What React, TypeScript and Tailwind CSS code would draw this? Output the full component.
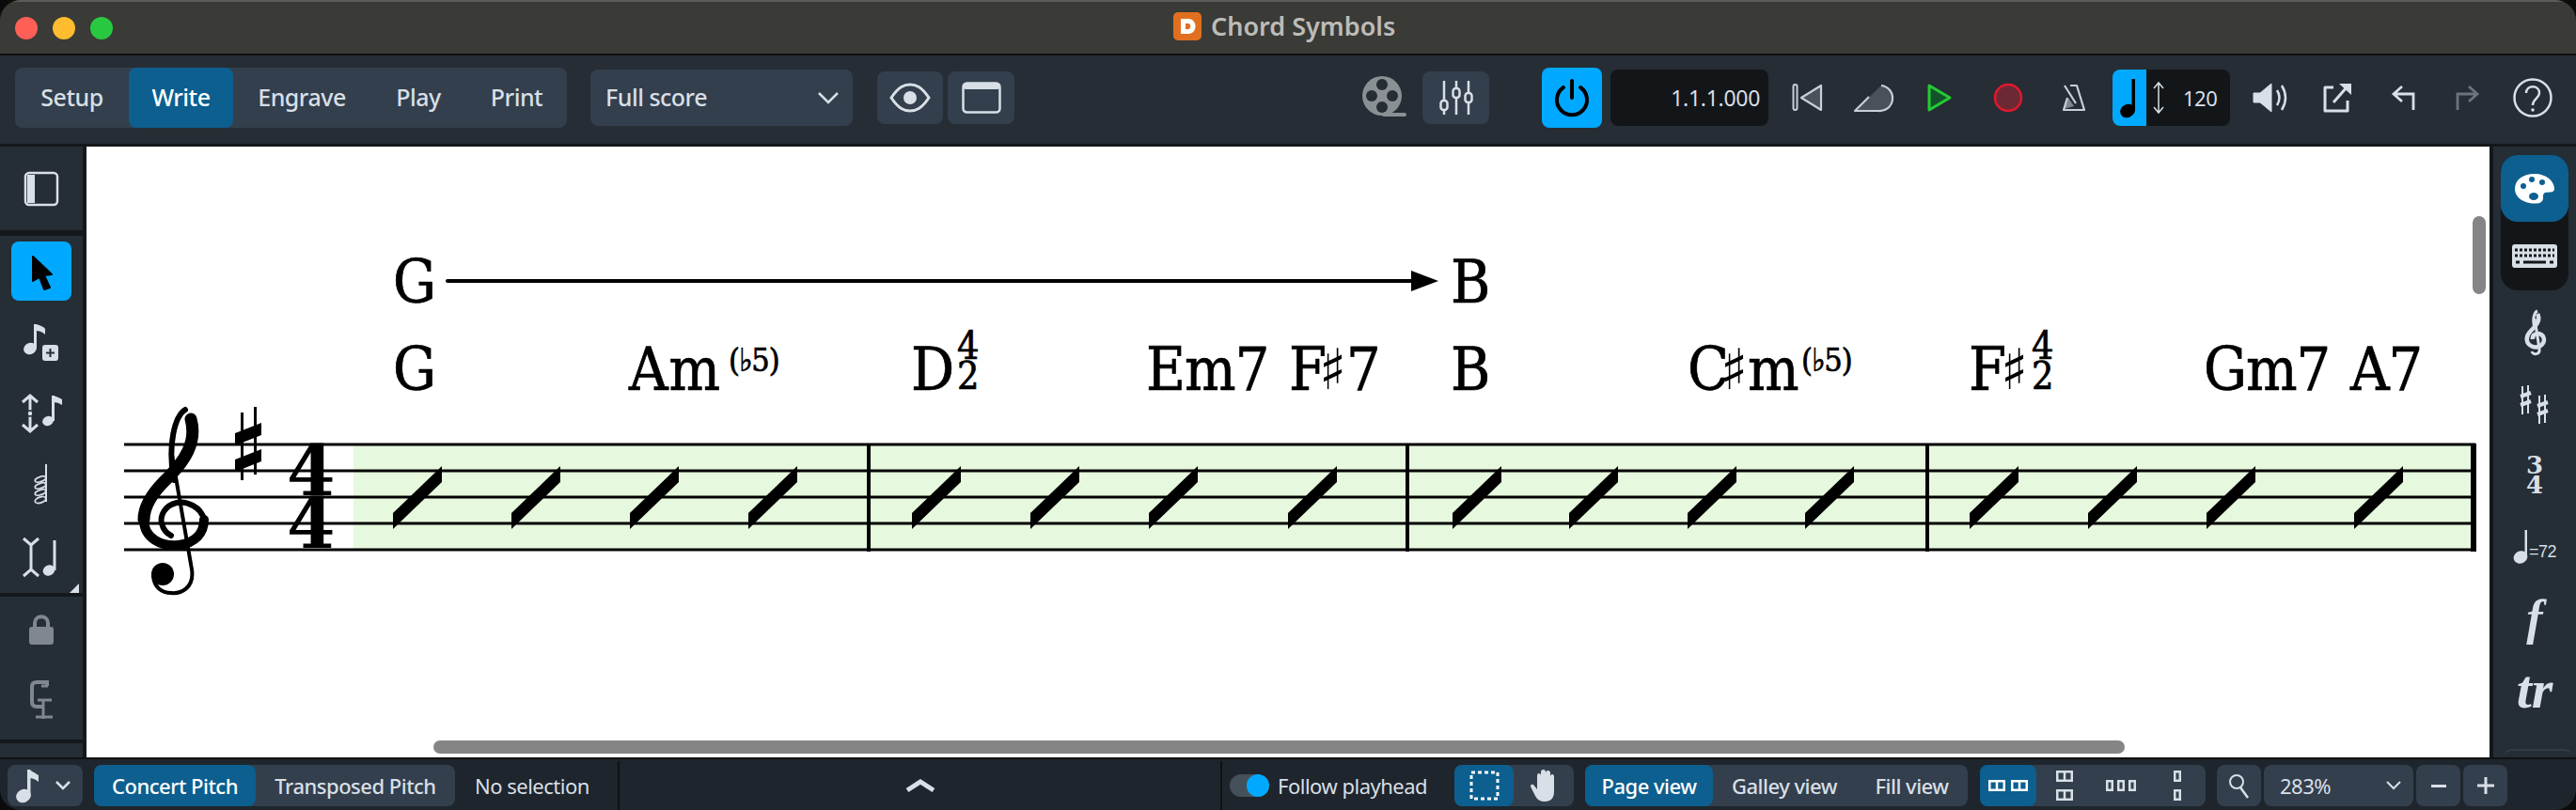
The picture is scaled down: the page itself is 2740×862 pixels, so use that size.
import type { ReactNode } from "react";

const slashes = [418, 544, 670, 796, 970, 1096, 1222, 1370, 1545, 1669, 1795, 1920, 2095, 2221, 2347, 2504];
const staffLines = [472, 500, 528, 556, 584];
const barlines = [924, 1497, 2050];

const Ico = ({ w = 44, h = 44, children }: { w?: number; h?: number; children: ReactNode }) => (
    <svg width={w} height={h} viewBox={`0 0 ${w} ${h}`} fill="none" className="shrink-0">
        {children}
    </svg>
);

const ToolBtn = ({ children, active }: { children: ReactNode; active?: boolean }) => (
    <div className={`flex items-center justify-center w-[64px] h-[64px] mx-auto rounded-lg ${active ? "bg-[#00a9ff]" : ""}`}>{children}</div>
);

const Score = () => (
    <svg className="absolute inset-0" width="2556" height="651" viewBox="92 155 2556 651" fill="none">
        <rect x="376" y="472" width="2253" height="112" fill="#e6f8dd" />
        {staffLines.map((y) => (
            <rect key={y} x="132" y={y - 1.5} width="2501" height="3" fill="#000" />
        ))}
        {barlines.map((x) => (
            <rect key={x} x={x - 2} y="471" width="4" height="115" fill="#000" />
        ))}
        <rect x="2628" y="471" width="6" height="115" fill="#000" />
        {slashes.map((x) => (
            <polygon key={x} points={`${x},545 ${x + 52},495 ${x + 52},512 ${x},562`} fill="#000" />
        ))}
        {/* treble clef */}
        <g stroke="#000" strokeLinecap="round">
            <path d="M182 478 L204 605 C207 625 192 631 182 630 C172 630 164 624 163 612" strokeWidth="4" />
            <path d="M185 510 C178 472 186 442 197 435" strokeWidth="6" />
            <path d="M203 445 C210 470 196 490 178 508 C160 525 153 540 153 552" strokeWidth="13" />
            <path d="M153 552 C153 572 172 581 190 579 C208 577 217 566 217 552" strokeWidth="10" />
            <path d="M217 552 C214 538 198 532 188 534 C175 537 170 548 172 556 C174 564 178 567 182 569" strokeWidth="6" />
        </g>
        <circle cx="173" cy="610" r="12" fill="#000" />
        {/* key signature sharp */}
        <g fill="#000">
            <rect x="256" y="438" width="3" height="72" />
            <rect x="270" y="432" width="3" height="72" />
            <polygon points="250,460 278,449 278,462 250,473" />
            <polygon points="250,488 278,477 278,490 250,501" />
        </g>
        {/* line between the two chords */}
        <rect x="474" y="296" width="1030" height="4" rx="2" fill="#000" />
        <polygon points="1501,287 1530,298 1501,309" fill="#000" />
    </svg>
);

const chordFont = "absolute whitespace-nowrap leading-none text-black font-['DejaVu_Serif_Condensed','DejaVu_Serif',serif] [-webkit-text-stroke:0.7px_#000]";
const big = "text-[64px] tracking-[-1px]";
const small = "text-[41px]";
const paren = "text-[34px] tracking-[-1px]";
const acc = "absolute leading-none text-black font-['DejaVu_Sans',sans-serif] font-bold text-[60px]";

const Chords = () => (
    <>
        <span className={`${chordFont} ${big} left-[326px] top-[112px]`}>G</span>
        <span className={`${chordFont} ${big} left-[1451px] top-[112px]`}>B</span>
        <span className={`${chordFont} ${big} left-[326px] top-[205px]`}>G</span>
        <span className={`${chordFont} text-[64px] tracking-[1px] left-[577px] top-[205px]`}>Am</span>
        <span className={`${chordFont} ${paren} left-[683px] top-[210px]`}>(♭5)</span>
        <span className={`${chordFont} ${big} left-[877px] top-[205px]`}>D</span>
        <span className={`${chordFont} ${small} left-[926px] top-[192px]`}>4</span>
        <span className={`${chordFont} ${small} left-[926px] top-[224px]`}>2</span>
        <span className={`${chordFont} ${big} left-[1127px] top-[205px]`}>Em7</span>
        <span className={`${chordFont} ${big} left-[1279px] top-[205px]`}>F</span>
        <span className={`${acc} left-[1311px] top-[207px]`}>♯</span>
        <span className={`${chordFont} ${big} left-[1340px] top-[205px]`}>7</span>
        <span className={`${chordFont} ${big} left-[1451px] top-[205px]`}>B</span>
        <span className={`${chordFont} ${big} left-[1703px] top-[205px]`}>C</span>
        <span className={`${acc} left-[1738px] top-[207px]`}>♯</span>
        <span className={`${chordFont} ${big} left-[1767px] top-[205px]`}>m</span>
        <span className={`${chordFont} ${paren} left-[1824px] top-[210px]`}>(♭5)</span>
        <span className={`${chordFont} ${big} left-[2002px] top-[205px]`}>F</span>
        <span className={`${acc} left-[2036px] top-[207px]`}>♯</span>
        <span className={`${chordFont} ${small} left-[2069px] top-[192px]`}>4</span>
        <span className={`${chordFont} ${small} left-[2069px] top-[224px]`}>2</span>
        <span className={`${chordFont} ${big} left-[2252px] top-[205px]`}>Gm7</span>
        <span className={`${chordFont} ${big} left-[2408px] top-[205px]`}>A7</span>
        <span className="absolute leading-none text-black font-['DejaVu_Serif',serif] font-bold text-[74px] left-[213px] top-[308px]">4</span>
        <span className="absolute leading-none text-black font-['DejaVu_Serif',serif] font-bold text-[74px] left-[213px] top-[364px]">4</span>
    </>
);

const LeftPanel = () => (
    <div className="w-[92px] shrink-0 flex flex-col bg-[#15181b] pr-1">
        <div className="h-[89px] bg-[#252d35] flex items-center justify-center">
            <Ico w={38} h={38}>
                <rect x="2" y="2" width="34" height="34" rx="4" stroke="#d8dfe6" strokeWidth="2.5" />
                <rect x="4" y="4" width="8" height="30" fill="#d8dfe6" />
            </Ico>
        </div>
        <div className="relative mt-[6px] h-[380px] bg-[#252d35] pt-[6px] flex flex-col">
            <ToolBtn active>
                <Ico>
                    <path d="M13 6 L33 25 L25 26 L31 39 L25 41 L20 28 L13 32 Z" fill="#000" stroke="#000" strokeWidth="2" strokeLinejoin="round" />
                </Ico>
            </ToolBtn>
            <div className="h-[77px] flex items-center justify-center mt-[5px]">
                <Ico w={40} h={44}>
                    <ellipse cx="8" cy="29" rx="7" ry="6" transform="rotate(-25 8 29)" fill="#d8dfe6" />
                    <rect x="12" y="3" width="3" height="26" fill="#d8dfe6" />
                    <path d="M14 3 Q22 5 24 8 V14 Q20 10 14 10 Z" fill="#d8dfe6" />
                    <rect x="21" y="25" width="17" height="17" rx="3" fill="#d8dfe6" />
                    <path d="M29.5 29 V38 M25 33.5 H34" stroke="#252d35" strokeWidth="2" />
                </Ico>
            </div>
            <div className="h-[77px] flex items-center justify-center">
                <Ico w={46} h={44}>
                    <path d="M11 3 V41 M3 10 L11 3 L19 10 M3 34 L11 41 L19 34" stroke="#d8dfe6" strokeWidth="3" />
                    <circle cx="11" cy="22" r="3" fill="#d8dfe6" stroke="#252d35" strokeWidth="1.5" />
                    <ellipse cx="30" cy="30" rx="6" ry="5" transform="rotate(-25 30 30)" fill="#d8dfe6" />
                    <rect x="34" y="3" width="3" height="27" fill="#d8dfe6" />
                    <path d="M36 3 Q42 5 45 7 V13 Q41 10 36 10 Z" fill="#d8dfe6" />
                </Ico>
            </div>
            <div className="h-[77px] flex items-center justify-center">
                <Ico w={18} h={46}>
                    <rect x="13" y="1" width="2" height="40" fill="#d8dfe6" />
                    <g stroke="#d8dfe6" strokeWidth="1.8">
                        <ellipse cx="8" cy="17" rx="6" ry="2.6" transform="rotate(-20 8 17)" />
                        <ellipse cx="8" cy="24" rx="6" ry="2.6" transform="rotate(-20 8 24)" />
                        <ellipse cx="8" cy="31" rx="6" ry="2.6" transform="rotate(-20 8 31)" />
                        <ellipse cx="8" cy="39" rx="6" ry="3" transform="rotate(-20 8 39)" />
                    </g>
                </Ico>
            </div>
            <div className="h-[77px] flex items-center justify-center">
                <Ico w={40} h={44}>
                    <path d="M9 8 V36 M1 2 L9 9 L17 2 M1 42 L9 35 L17 42" stroke="#d8dfe6" strokeWidth="3" />
                    <ellipse cx="28" cy="36" rx="6.5" ry="5.5" transform="rotate(-25 28 36)" fill="#d8dfe6" />
                    <rect x="32.5" y="4" width="3" height="32" fill="#d8dfe6" />
                </Ico>
            </div>
            <div className="absolute right-1 bottom-0 w-0 h-0 border-l-[10px] border-l-transparent border-b-[10px] border-b-[#d8dfe6]" />
        </div>
        <div className="mt-1 h-[152px] bg-[#252d35] flex flex-col items-center pt-[18px] gap-[36px]">
            <Ico w={28} h={34}>
                <path d="M7 14 V10 C7 1 21 1 21 10 V14" stroke="#80878f" strokeWidth="4" />
                <rect x="1" y="14" width="26" height="19" rx="3" fill="#80878f" />
            </Ico>
            <Ico w={26} h={44}>
                <path d="M19 7 V3 H8 Q3 3 3 8 V24 Q3 29 8 29 H14" stroke="#80878f" strokeWidth="4" />
                <path d="M13 7 H20 M9 22 H24 M15 22 V42 M7 40 H25" stroke="#80878f" strokeWidth="3" />
            </Ico>
        </div>
        <div className="mt-1 flex-1 bg-[#252d35]" />
    </div>
);

const RightPanel = () => (
    <div className="w-[92px] shrink-0 flex flex-col bg-[#252d35] border-l-4 border-[#15181b] pl-2 pt-[9px]">
        <div className="w-[72px] h-[144px] rounded-[18px] bg-[#131619]">
            <div className="h-[71px] rounded-[18px] bg-[#0c5f8f] flex items-center justify-center">
                <Ico w={44} h={36}>
                    <path d="M22 2 C35 2 43 10 43 18 C43 23 36 21 33 22 C29 24 33 29 29 32 C24 36 1 33 1 18 C1 8 10 2 22 2 Z" fill="#fff" />
                    <circle cx="10" cy="15" r="3" fill="#0c5f8f" />
                    <circle cx="19" cy="8" r="3" fill="#0c5f8f" />
                    <circle cx="30" cy="11" r="3" fill="#0c5f8f" />
                    <ellipse cx="21" cy="26" rx="5" ry="4" fill="#0c5f8f" />
                </Ico>
            </div>
            <div className="h-[73px] flex items-center justify-center">
                <Ico w={48} h={26}>
                    <rect x="0" y="0" width="48" height="25" rx="3" fill="#d8dfe6" />
                    <path d="M3 6 H45 M3 12 H45" stroke="#131619" strokeWidth="3" strokeDasharray="3 2" />
                    <path d="M4 19 H8 M12 19 H36 M40 19 H44" stroke="#131619" strokeWidth="3" />
                </Ico>
            </div>
        </div>
        <div className="h-[76px] flex items-center justify-center w-[72px] mt-[7px]">
            <Ico w={26} h={50}>
                <path d="M16 5 C20 12 14 18 9 23 C3 29 3 37 11 40 C20 42 25 35 22 29 C18 24 10 26 11 32" stroke="#d8dfe6" strokeWidth="4.5" />
                <path d="M13 20 C10 10 13 3 16 2 M13 10 L18 42 C19 49 11 49 10 45" stroke="#d8dfe6" strokeWidth="3" />
            </Ico>
        </div>
        <div className="h-[76px] flex items-center justify-center w-[72px]">
            <Ico w={32} h={42}>
                <path d="M3 2 V32 M9 1 V31 M21 12 V42 M27 11 V41" stroke="#d8dfe6" strokeWidth="2" />
                <path d="M1 13 L12 9 M1 22 L12 18 M19 23 L30 19 M19 32 L30 28" stroke="#d8dfe6" strokeWidth="4" />
            </Ico>
        </div>
        <div className="h-[76px] flex flex-col items-center justify-center w-[72px] text-[#d8dfe6] font-['DejaVu_Serif',serif] font-bold text-[26px] leading-[21px]">
            <span>3</span>
            <span>4</span>
        </div>
        <div className="h-[76px] flex items-center justify-center w-[72px] text-[#d8dfe6]">
            <Ico w={16} h={38}>
                <ellipse cx="8" cy="30" rx="7.5" ry="6.5" transform="rotate(-25 8 30)" fill="#d8dfe6" />
                <rect x="12.5" y="1" width="2.5" height="29" fill="#d8dfe6" />
            </Ico>
            <span className="text-[18px] font-['Liberation_Sans',sans-serif] mt-[10px] ml-[1px] tracking-[-0.5px]">=72</span>
        </div>
        <div className="h-[76px] flex items-center justify-center w-[72px] text-[#d8dfe6] font-['Liberation_Serif',serif] font-bold italic text-[52px] leading-none">f</div>
        <div className="h-[76px] flex items-center justify-center w-[72px] text-[#d8dfe6] font-['Liberation_Serif',serif] font-bold italic text-[58px] leading-none">tr</div>
        <div className="flex-1 mx-auto w-[72px] rounded-t-lg border-t-2 border-[#333c45] mt-[25px]" />
    </div>
);

const Canvas = () => (
    <div className="relative flex-1 bg-white overflow-hidden">
        <Score />
        <Chords />
        <div className="absolute left-[369px] bottom-[4px] w-[1799px] h-[14px] rounded-full bg-[#858585]" />
        <div className="absolute right-[4px] top-[74px] w-[14px] h-[83px] rounded-full bg-[#858585]" />
    </div>
);

const Transport = ({ children }: { children: ReactNode }) => (
    <div className="w-[70px] shrink-0 flex items-center justify-center">{children}</div>
);

const Toolbar = () => (
    <div className="h-[96px] shrink-0 flex items-center pl-4 pb-1 bg-[#262d34] text-[#d8dfe6] font-['Noto_Sans',sans-serif] text-[25px] tracking-[-0.5px] font-medium border-t-2 border-[#111]">
        <div className="flex w-[587px] h-16 rounded-lg bg-[#333f4d]">
            <div className="w-[121px] flex items-center justify-center">Setup</div>
            <div className="w-[111px] flex items-center justify-center rounded-lg bg-[#0c5f8f] text-white">Write</div>
            <div className="w-[146px] flex items-center justify-center">Engrave</div>
            <div className="w-[102px] flex items-center justify-center">Play</div>
            <div className="w-[107px] flex items-center justify-center">Print</div>
        </div>
        <div className="ml-[25px] w-[279px] h-[60px] rounded-lg bg-[#333f4d] flex items-center justify-between pl-4 pr-[14px]">
            <span>Full score</span>
            <Ico w={24} h={16}>
                <path d="M2 3 L12 13 L22 3" stroke="#d8dfe6" strokeWidth="2.5" />
            </Ico>
        </div>
        <div className="ml-[26px] w-[70px] h-14 rounded-lg bg-[#333f4d] flex items-center justify-center">
            <Ico w={44} h={32}>
                <path d="M2 16 C10 4 16 2 22 2 C28 2 34 4 42 16 C34 28 28 30 22 30 C16 30 10 28 2 16 Z" stroke="#d8dfe6" strokeWidth="3" />
                <circle cx="22" cy="16" r="7" fill="#d8dfe6" />
            </Ico>
        </div>
        <div className="ml-[5px] w-[71px] h-14 rounded-lg bg-[#333f4d] flex items-center justify-center">
            <Ico w={42} h={34}>
                <rect x="1.5" y="1.5" width="39" height="31" rx="4" stroke="#d8dfe6" strokeWidth="2.5" />
                <rect x="2" y="2" width="38" height="6" rx="2" fill="#d8dfe6" />
            </Ico>
        </div>
        <div className="ml-[369px] w-[50px] flex justify-center">
            <Ico w={50} h={50}>
                <circle cx="22" cy="23" r="21" fill="#8b9095" />
                <circle cx="22" cy="11" r="6" fill="#262d34" />
                <circle cx="22" cy="35" r="6" fill="#262d34" />
                <circle cx="11" cy="23" r="6" fill="#262d34" />
                <circle cx="33" cy="23" r="6" fill="#262d34" />
                <rect x="22" y="41" width="26" height="4" rx="2" fill="#8b9095" />
            </Ico>
        </div>
        <div className="ml-[15px] w-[71px] h-14 rounded-lg bg-[#333f4d] flex items-center justify-center">
            <Ico w={40} h={40}>
                <path d="M7 2 V38 M20 2 V38 M33 2 V38" stroke="#d8dfe6" strokeWidth="2.5" />
                <rect x="3.5" y="23" width="7" height="10" rx="3" fill="#333f4d" stroke="#d8dfe6" strokeWidth="2.5" />
                <rect x="16.5" y="10" width="7" height="10" rx="3" fill="#333f4d" stroke="#d8dfe6" strokeWidth="2.5" />
                <rect x="29.5" y="15" width="7" height="10" rx="3" fill="#333f4d" stroke="#d8dfe6" strokeWidth="2.5" />
            </Ico>
        </div>
        <div className="ml-[56px] w-16 h-16 rounded-lg bg-[#00a9ff] flex items-center justify-center">
            <Ico w={40} h={44}>
                <path d="M11 11 A16 16 0 1 0 29 11" stroke="#000" strokeWidth="4" strokeLinecap="round" />
                <path d="M20 4 V22" stroke="#000" strokeWidth="4" strokeLinecap="round" />
            </Ico>
        </div>
        <div className="ml-[9px] w-[168px] h-[60px] rounded-lg bg-[#131619] flex items-center justify-end pr-[9px] text-[23px] font-normal tracking-[-0.3px]">1.1.1.000</div>
        <div className="ml-[7px] flex">
            <Transport>
                <Ico w={34} h={32}>
                    <rect x="1.5" y="2" width="4" height="27" rx="2" stroke="#c8cfd6" strokeWidth="2" />
                    <path d="M31 3 V29 L10 16 Z" fill="#4b5158" stroke="#c8cfd6" strokeWidth="2.2" strokeLinejoin="round" />
                </Ico>
            </Transport>
            <Transport>
                <Ico w={44} h={32}>
                    <path d="M2 30 L30 3 A13.5 13.5 0 0 1 27 30 Z" fill="#4b5158" />
                    <path d="M30 3 A13.5 13.5 0 0 1 27 30 H2 L17 15" stroke="#c8cfd6" strokeWidth="2.2" strokeLinejoin="round" />
                </Ico>
            </Transport>
            <Transport>
                <Ico w={28} h={32}>
                    <path d="M3 3 L25 16 L3 29 Z" fill="#14522a" stroke="#22cc33" strokeWidth="3" strokeLinejoin="round" />
                </Ico>
            </Transport>
            <div className="w-[3px]" />
            <Transport>
                <Ico w={32} h={32}>
                    <circle cx="16" cy="16" r="14" fill="#6b2a33" stroke="#e0182d" strokeWidth="2.5" />
                </Ico>
            </Transport>
            <Transport>
                <Ico w={26} h={30}>
                    <path d="M2 27 L7 15 L13 24 Z" fill="#80878f" />
                    <path d="M9 2 H16 L24 28 H2 L6 15" stroke="#c8cfd6" strokeWidth="2.2" strokeLinejoin="round" />
                    <path d="M3 2 L15 21" stroke="#c8cfd6" strokeWidth="2.2" />
                </Ico>
            </Transport>
        </div>
        <div className="ml-[6px] w-[125px] h-[60px] rounded-lg bg-[#131619] flex items-center overflow-hidden text-[22px] font-normal">
            <div className="w-9 h-full bg-[#00a9ff] flex items-center justify-center">
                <Ico w={24} h={44}>
                    <ellipse cx="10" cy="36" rx="8" ry="7" transform="rotate(-25 10 36)" fill="#000" />
                    <rect x="14.5" y="2" width="3.5" height="34" fill="#000" />
                </Ico>
            </div>
            <div className="ml-[5px]">
                <Ico w={16} h={36}>
                    <path d="M8 2 V34 M3 8 L8 2 L13 8 M3 28 L8 34 L13 28" stroke="#d8dfe6" strokeWidth="1.5" />
                </Ico>
            </div>
            <span className="ml-[18px]">120</span>
        </div>
        <div className="ml-[10px] flex">
            <Transport>
                <Ico w={42} h={34}>
                    <path d="M1 12 H8 L20 2 V32 L8 22 H1 Z" fill="#d8dfe6" stroke="#d8dfe6" strokeLinejoin="round" />
                    <path d="M26 9 Q31 17 26 25 M31 4 Q39 17 31 30" stroke="#d8dfe6" strokeWidth="2.5" />
                </Ico>
            </Transport>
            <Transport>
                <Ico w={34} h={34}>
                    <path d="M12 6 H3 V31 H27 V20" stroke="#d8dfe6" strokeWidth="3" strokeLinejoin="round" />
                    <path d="M12 22 L26 6" stroke="#d8dfe6" strokeWidth="3" />
                    <path d="M18 2 H31 V14 Z" fill="#d8dfe6" />
                </Ico>
            </Transport>
            <Transport>
                <Ico w={28} h={30}>
                    <path d="M12 3 L3 11 L12 19 M3 11 H24 V28" stroke="#d8dfe6" strokeWidth="2.8" />
                </Ico>
            </Transport>
            <div className="w-16 flex items-center justify-center">
                <Ico w={28} h={30}>
                    <path d="M16 3 L25 11 L16 19 M25 11 H4 V28" stroke="#6d747b" strokeWidth="2.8" />
                </Ico>
            </div>
            <div className="ml-[3px] w-[70px] flex items-center justify-center">
                <Ico w={42} h={44}>
                    <circle cx="21" cy="22" r="19.5" stroke="#d8dfe6" strokeWidth="2.5" />
                    <path d="M14 17 C14 8 28 8 28 17 C28 23 21 23 21 30" stroke="#d8dfe6" strokeWidth="2.5" />
                    <circle cx="21" cy="35" r="1.8" fill="#d8dfe6" />
                </Ico>
            </div>
        </div>
    </div>
);

// one little page of the page-layout icons: a frame with a fold down the middle
const PageBox = ({ x, y, w, color, fold }: { x: number; y: number; w: number; color: string; fold?: boolean }) => (
    <g stroke={color} strokeWidth="2.5">
        <rect x={x + 1.25} y={y + 1.25} width={w - 2.5} height="9.5" />
        {fold && <path d={`M${x + w / 2} ${y} V${y + 12}`} />}
    </g>
);

const StatusBar = () => (
    <div className="h-[56px] shrink-0 flex items-center pt-[2px] bg-[#1e252c] border-t-2 border-[#111] text-[#d8dfe6] font-['Noto_Sans',sans-serif] text-[22px] tracking-[-0.5px]">
        <div className="ml-2 w-20 h-11 rounded-lg bg-[#333f4d] flex items-center pl-2 gap-4">
            <Ico w={26} h={38}>
                <ellipse cx="9" cy="30" rx="8" ry="7" transform="rotate(-25 9 30)" fill="#d8dfe6" />
                <rect x="13" y="2" width="3.5" height="28" fill="#d8dfe6" />
                <path d="M15 2 Q22 6 25 8 V15 Q20 11 15 11 Z" fill="#d8dfe6" />
            </Ico>
            <Ico w={18} h={12}>
                <path d="M2 2 L9 9 L16 2" stroke="#d8dfe6" strokeWidth="2.5" />
            </Ico>
        </div>
        <div className="ml-3 w-[384px] h-11 rounded-lg bg-[#333f4d] flex font-medium">
            <div className="w-[172px] rounded-lg bg-[#0c5f8f] text-white flex items-center justify-center">Concert Pitch</div>
            <div className="flex-1 flex items-center justify-center">Transposed Pitch</div>
        </div>
        <span className="ml-[21px] w-[152px]">No selection</span>
        <div className="self-stretch w-[2px] bg-[#111]" />
        <div className="w-[639px] flex justify-center">
            <Ico w={34} h={16}>
                <path d="M3 13 L17 4 L31 13" stroke="#d8dfe6" strokeWidth="5" />
            </Ico>
        </div>
        <div className="self-stretch w-[2px] bg-[#111]" />
        <div className="ml-2 w-[42px] h-6 rounded-full bg-[#46505b] relative">
            <div className="absolute right-0 top-0 w-6 h-6 rounded-full bg-[#00a9ff]" />
        </div>
        <span className="ml-[9px] w-[188px]">Follow playhead</span>
        <div className="w-[127px] h-11 rounded-lg bg-[#333f4d] flex">
            <div className="w-[63px] rounded-lg bg-[#0c5f8f] flex items-center justify-center">
                <Ico w={32} h={32}>
                    <rect x="2" y="2" width="28" height="28" stroke="#fff" strokeWidth="3" strokeDasharray="4 3" />
                </Ico>
            </div>
            <div className="flex-1 flex items-center justify-center">
                <Ico w={30} h={36}>
                    <path d="M8 22 V8 Q8 5 10 5 Q12 5 12 8 V4 Q12 1 14.5 1 Q17 1 17 4 V5 Q17 2 19.5 2 Q22 2 22 5 V9 Q22 6 24 6 Q26 6 26 9 V24 Q26 35 16 35 Q9 35 6 29 L1 19 Q1 16 4 17 L8 22 Z" fill="#d8dfe6" />
                </Ico>
            </div>
        </div>
        <div className="ml-3 w-[407px] h-11 rounded-lg bg-[#333f4d] flex font-medium">
            <div className="w-[136px] rounded-lg bg-[#0c5f8f] text-white flex items-center justify-center">Page view</div>
            <div className="w-[152px] flex items-center justify-center">Galley view</div>
            <div className="flex-1 flex items-center justify-center">Fill view</div>
        </div>
        <div className="ml-[13px] w-[240px] h-11 rounded-lg bg-[#333f4d] flex">
            <div className="w-[60px] rounded-lg bg-[#0c5f8f] flex items-center justify-center">
                <Ico w={42} h={12}>
                    <PageBox x={0} y={0} w={18} color="#fff" fold />
                    <PageBox x={24} y={0} w={18} color="#fff" fold />
                </Ico>
            </div>
            <div className="w-[60px] flex items-center justify-center">
                <Ico w={18} h={32}>
                    <PageBox x={0} y={0} w={18} color="#d8dfe6" fold />
                    <PageBox x={0} y={20} w={18} color="#d8dfe6" fold />
                </Ico>
            </div>
            <div className="w-[60px] flex items-center justify-center">
                <Ico w={32} h={12}>
                    <PageBox x={0} y={0} w={8} color="#d8dfe6" />
                    <PageBox x={12} y={0} w={8} color="#d8dfe6" />
                    <PageBox x={24} y={0} w={8} color="#d8dfe6" />
                </Ico>
            </div>
            <div className="w-[60px] flex items-center justify-center">
                <Ico w={8} h={32}>
                    <PageBox x={0} y={0} w={8} color="#d8dfe6" />
                    <PageBox x={0} y={20} w={8} color="#d8dfe6" />
                </Ico>
            </div>
        </div>
        <div className="ml-3 w-[47px] h-11 rounded-lg bg-[#333f4d] flex items-center justify-center">
            <Ico w={24} h={28}>
                <circle cx="9" cy="10" r="7" stroke="#d8dfe6" strokeWidth="2" />
                <path d="M13 16 L21 27" stroke="#d8dfe6" strokeWidth="2.5" />
            </Ico>
        </div>
        <div className="ml-[3px] w-[159px] h-11 rounded-lg bg-[#333f4d] flex items-center justify-between pl-[17px] pr-3">
            <span>283%</span>
            <Ico w={18} h={12}>
                <path d="M2 2 L9 9 L16 2" stroke="#d8dfe6" strokeWidth="2" />
            </Ico>
        </div>
        <div className="ml-[3px] w-[47px] h-11 rounded-lg bg-[#333f4d] flex items-center justify-center">
            <div className="w-4 h-[3px] bg-[#d8dfe6]" />
        </div>
        <div className="ml-[3px] w-[47px] h-11 rounded-lg bg-[#333f4d] flex items-center justify-center">
            <Ico w={20} h={20}>
                <path d="M10 1 V19 M1 10 H19" stroke="#d8dfe6" strokeWidth="3" />
            </Ico>
        </div>
    </div>
);

export default function App() {
    return (
        <div className="w-[2740px] h-[862px] bg-[#0b0b0b] overflow-hidden">
            <div className="w-full h-full flex flex-col rounded-[22px] overflow-hidden">
                <div className="h-[57px] shrink-0 relative flex items-center pl-4 gap-4 bg-[#3a3a37] border-t-2 border-[#5c5c5a]">
                    <div className="w-6 h-6 rounded-full bg-[#ff5f57]" />
                    <div className="w-6 h-6 rounded-full bg-[#febc2e]" />
                    <div className="w-6 h-6 rounded-full bg-[#28c840]" />
                    <div className="absolute left-[1248px] top-[6px] flex items-center gap-[10px]">
                        <div className="w-[30px] h-[30px] rounded-[5px] bg-[#e0701f] flex items-center justify-center">
                            <Ico w={22} h={22}>
                                <path d="M4 3 H12 C22 3 22 19 12 19 H4 Z M9 8 V14 H12 C15 14 15 8 12 8 Z" fill="#fff" fillRule="evenodd" />
                            </Ico>
                        </div>
                        <span className="text-[#bdbcb8] text-[27px] font-semibold font-['Noto_Sans',sans-serif]">Chord Symbols</span>
                    </div>
                </div>
                <Toolbar />
                <div className="flex-1 min-h-0 flex bg-[#15181b] pt-[3px]">
                    <LeftPanel />
                    <Canvas />
                    <RightPanel />
                </div>
                <StatusBar />
            </div>
        </div>
    );
}
